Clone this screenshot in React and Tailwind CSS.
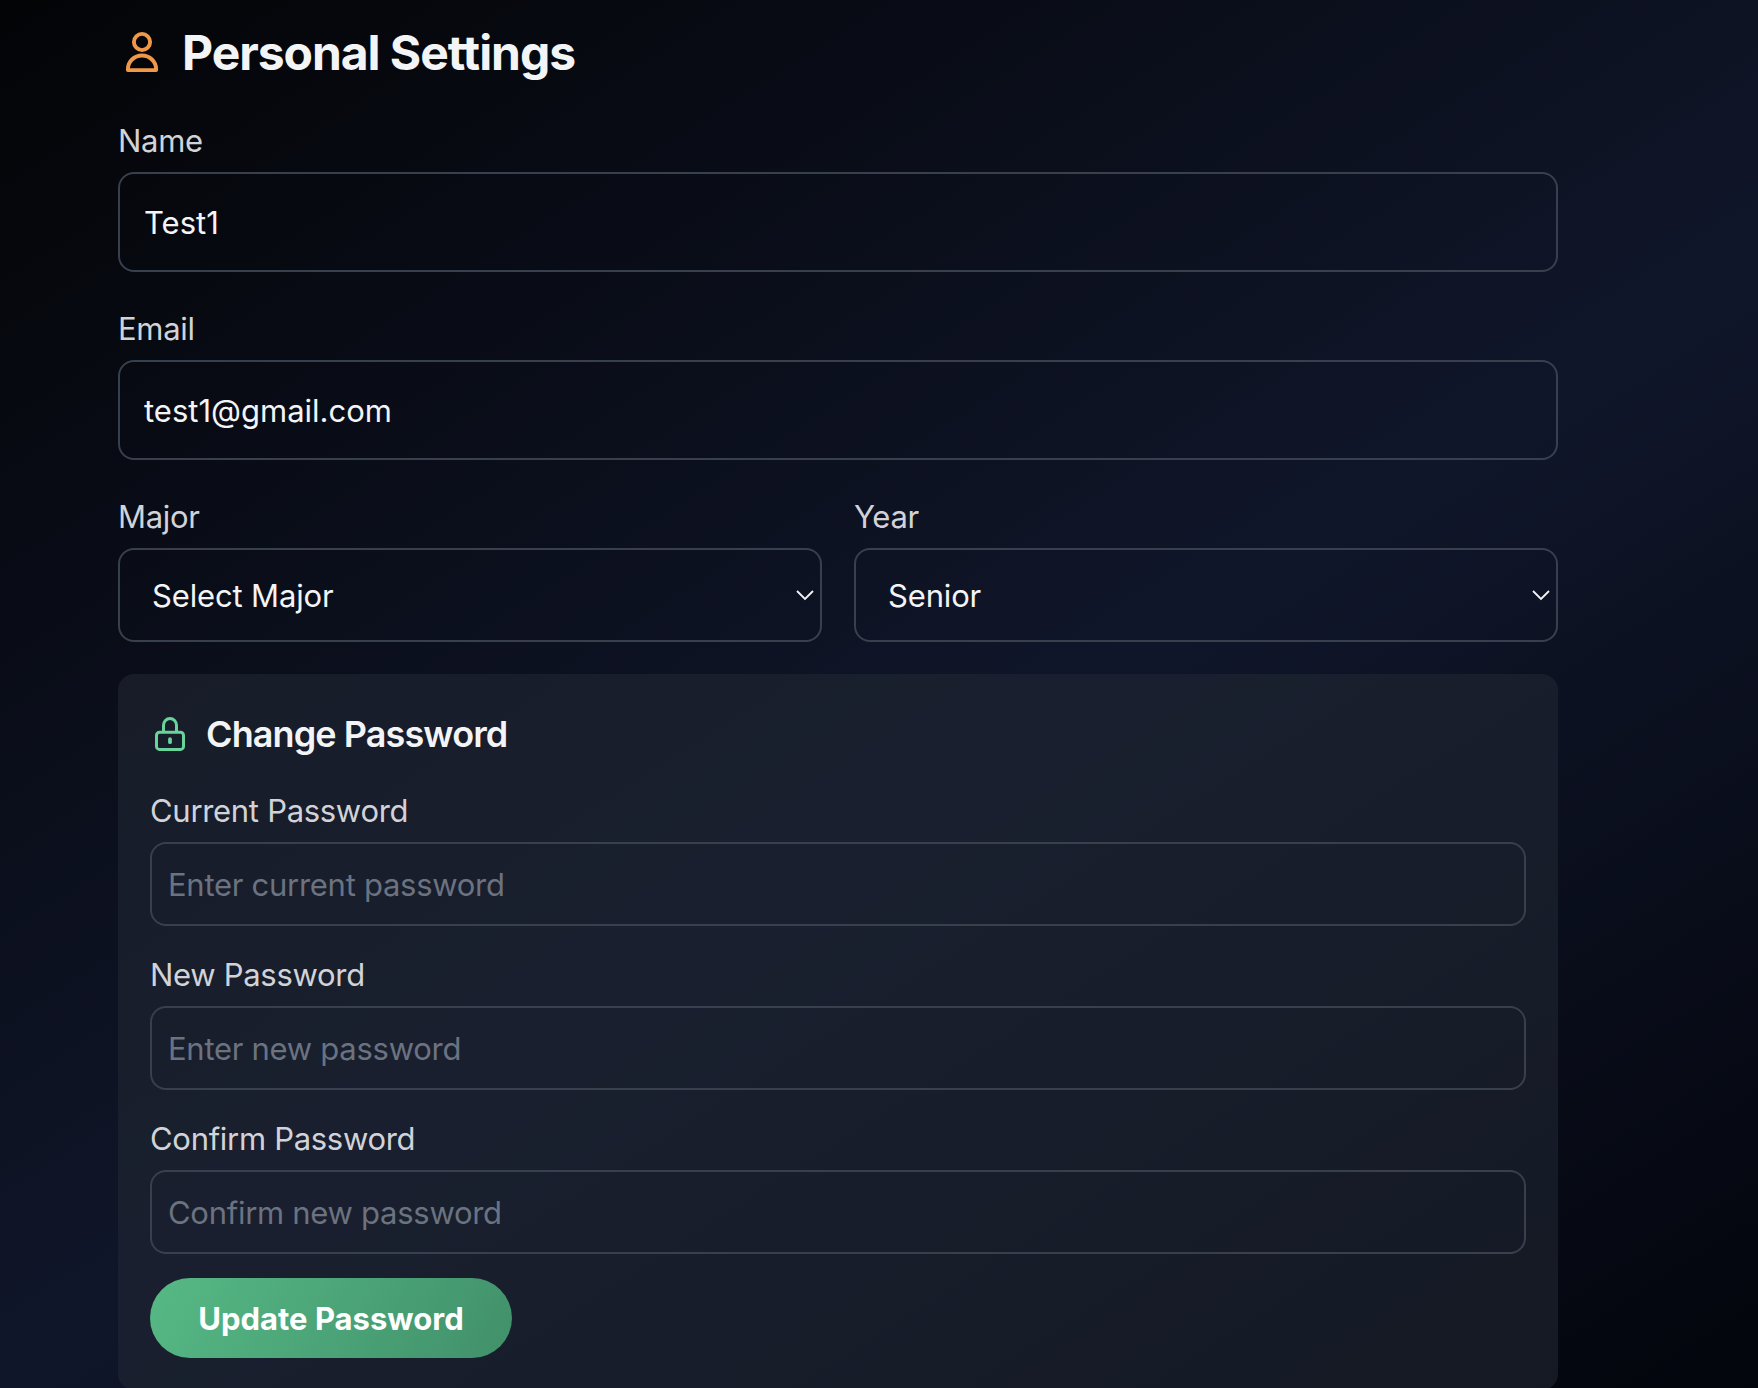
const Label = ({ children }) => (
  <label className="block h-[48px] pt-px text-[31px] leading-[48px] tracking-[-0.3px] text-[#d1d3d8]">{children}</label>
);

function PersonIcon() {
  return (
    <svg className="h-[48px] w-[48px] text-[#f0984a]" viewBox="0 0 48 48" fill="none" stroke="currentColor" strokeWidth="3.9" strokeLinejoin="round">
      <circle cx="24" cy="14" r="8.1" />
      <path d="M9.9 42.1v-.9a14.1 13.7 0 0 1 28.2 0v.9z" />
    </svg>
  );
}

function LockIcon() {
  return (
    <svg className="h-[40px] w-[40px] text-[#68d39b]" viewBox="0 0 40 40" fill="none" stroke="currentColor" strokeWidth="3">
      <rect x="6.5" y="18.2" width="27" height="17.2" rx="3" />
      <path d="M13.5 18V11.3a6.5 6.8 0 0 1 13 0V18" />
      <path d="M20 25.2v3" strokeWidth="3.8" strokeLinecap="round" />
    </svg>
  );
}

function SelectBox({ label, value }) {
  return (
    <div>
      <Label>{label}</Label>
      <button className="mt-2 flex h-[94px] w-full items-center justify-between rounded-2xl border-2 border-[#383f4d] pl-8 pr-[5px] text-[31px] tracking-[-0.15px] text-gray-100">
        <span className="pt-0.5">{value}</span>
        <svg className="h-[20px] w-[20px]" viewBox="0 0 20 20" fill="none" stroke="currentColor" strokeWidth="1.8">
          <path d="M2 6l8 8 8-8" />
        </svg>
      </button>
    </div>
  );
}

function TextField({ label, value }) {
  return (
    <div>
      <Label>{label}</Label>
      <input
        defaultValue={value}
        className="mt-2 block h-[100px] w-full rounded-2xl border-2 border-[#383f4d] bg-transparent px-6 text-[31px] text-gray-100"
      />
    </div>
  );
}

function PasswordField({ label, placeholder }) {
  return (
    <div>
      <Label>{label}</Label>
      <input
        type="password"
        placeholder={placeholder}
        className="mt-2 block h-[84px] w-full rounded-2xl border-2 border-[#383f4d] bg-transparent px-4 text-[31px] tracking-[-0.28px] placeholder:text-[#6b7280]"
      />
    </div>
  );
}

export default function App() {
  return (
    <main className="h-[1388px] overflow-hidden bg-[linear-gradient(147.5deg,#030406_0%,#10162a_55%,#02040a_103%)] px-[118px] pt-[20px] font-['Inter',sans-serif]">
      <div className="w-[1440px]">
        <h1 className="flex h-[64px] items-center gap-4 text-[48px] font-bold tracking-[-1.05px] text-gray-100">
          <PersonIcon />
          <span className="pt-0.5">Personal Settings</span>
        </h1>
        <div className="mt-8 flex flex-col gap-8">
          <TextField label="Name" value="Test1" />
          <TextField label="Email" value="test1@gmail.com" />
          <div className="grid grid-cols-2 gap-8">
            <SelectBox label="Major" value="Select Major" />
            <SelectBox label="Year" value="Senior" />
          </div>
        </div>
        <section className="mt-8 h-[716px] rounded-2xl bg-[rgb(31_38_50/0.6)] p-8">
          <h2 className="flex h-[56px] items-center gap-4 text-[36px] font-semibold tracking-[-0.9px] text-gray-100">
            <LockIcon />
            <span>Change Password</span>
          </h2>
          <div className="mt-6 flex flex-col gap-6">
            <PasswordField label="Current Password" placeholder="Enter current password" />
            <PasswordField label="New Password" placeholder="Enter new password" />
            <PasswordField label="Confirm Password" placeholder="Confirm new password" />
          </div>
          <button className="mt-6 h-[80px] w-[362px] rounded-full bg-[linear-gradient(120deg,#56b985,#41906a)] pt-0.5 text-[31px] font-bold text-white">
            Update Password
          </button>
        </section>
      </div>
    </main>
  );
}
